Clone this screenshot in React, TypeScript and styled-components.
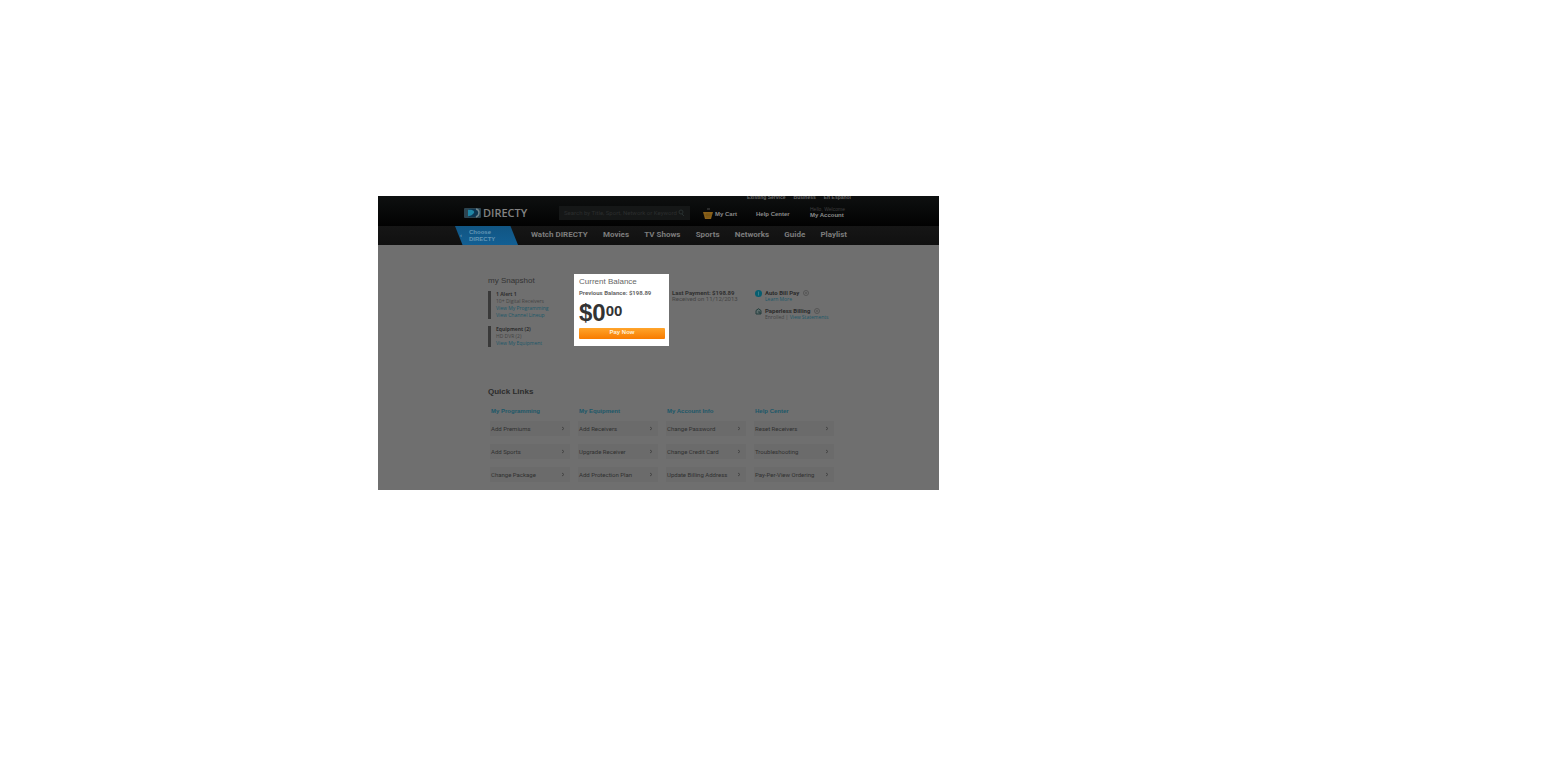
import React from "react";
import styled, { createGlobalStyle } from "styled-components";

const Global = createGlobalStyle`
  * { box-sizing: border-box; }
  body { margin: 0; background: #fff; font-family: "Liberation Sans", Arial, sans-serif; }
  a { color: inherit; text-decoration: none; }
  h1, h2, h3, p, ul { margin: 0; padding: 0; font-weight: inherit; font-size: inherit; }
  ul { list-style: none; }
  button, input { font-family: inherit; }
`;

const Page = styled.div`
  padding: 196px 24px 24px 378px;
`;
const Frame = styled.div`
  width: 100%;
  max-width: 561px;
  overflow: hidden;
  background: #6f6f6f;
  color: #2c2c2c;
`;
const Top = styled.header`
  background: linear-gradient(#0e1010, #020202);
`;
const Inner = styled.div`
  max-width: 389px;
  margin: 0 auto;
`;
const Utility = styled.nav`
  display: flex;
  justify-content: flex-end;
  align-items: flex-end;
  gap: 8px;
  height: 4px;
  padding-right: 2px;
  font-size: 5px;
  line-height: 6px;
  font-weight: 700;
  color: #686868;
`;
const Brand = styled.div`
  display: grid;
  grid-template-columns: 95px 144px 53px 54px 1fr;
  align-items: center;
  height: 26px;
  padding-bottom: 1px;
  font-size: 6px;
  font-weight: 700;
  color: #8a8a8a;
`;
const Logo = styled.a`
  display: flex;
  align-items: center;
  gap: 2px;
  font: 600 11px/12px "Open Sans", sans-serif;
  color: #828282;
`;
const Search = styled.form`
  display: flex;
  align-items: center;
  width: 131px;
  height: 14px;
  padding: 0 5px;
  background: #151717;
`;
const SearchInput = styled.input`
  flex: 1;
  min-width: 0;
  height: 10px;
  padding: 0;
  border: 0;
  background: none;
  font-family: Roboto, sans-serif;
  font-size: 6px;
  color: #303232;
  &::placeholder { color: #2c2e2e; opacity: 1; }
`;
const IconButton = styled.button`
  display: flex;
  padding: 0;
  border: 0;
  background: none;
`;
const TopLink = styled.a`
  display: flex;
  align-items: center;
  gap: 2px;
  padding-top: 2px;
  line-height: 8px;
  white-space: nowrap;
`;
const Account = styled.a`
  display: flex;
  flex-direction: column;
  font-size: 6px;
  line-height: 6px;
`;
const Greeting = styled.span`
  font-size: 5px;
  font-weight: 400;
  color: #3f3f3f;
  line-height: 5px;
`;
const NavBar = styled.nav`
  background: linear-gradient(#161616, #101010);
  height: 19px;
`;
const NavInner = styled(Inner)`
  display: flex;
  justify-content: space-between;
  padding-right: 6px;
`;
const Choose = styled.a`
  display: flex;
  align-items: center;
  gap: 7px;
  width: 63px;
  height: 19px;
  margin-left: -9px;
  padding-left: 5px;
  clip-path: polygon(0 0, 88% 0, 100% 100%, 12% 100%);
  background: linear-gradient(#115583, #125f93);
  color: #6396b5;
  font-size: 6px;
  line-height: 7px;
  font-weight: 700;
`;
const NavLinks = styled.div`
  display: flex;
  justify-content: space-between;
  width: 316px;
  font: 700 8px/18px Roboto, sans-serif;
  color: #7c7c7c;
`;
const Main = styled.main`
  padding: 29px 90px 8px 110px;
`;
const Snapshot = styled.section`
  display: grid;
  grid-template-columns: 86px 95px 86px 1fr;
  align-items: start;
  font-family: Roboto, sans-serif;
`;
const Title = styled.h2<{ $light?: boolean }>`
  font: ${(p) => (p.$light ? 400 : 700)} 8px/14px "Liberation Sans", Arial, sans-serif;
  color: ${(p) => (p.$light ? "#333" : "#2c2c2c")};
`;
const Note = styled.div`
  margin-top: 3px;
  padding-left: 5px;
  border-left: 3px solid #393939;
  font: 5px/7px "Open Sans", sans-serif;
  white-space: nowrap;
  & + & { margin-top: 7px; }
`;
const Strong = styled.p`
  font-weight: 700;
  color: #303030;
`;
const Muted = styled.p`
  color: #444;
`;
const Teal = styled.a`
  color: #1c5869;
`;
const TealLine = styled(Teal)`
  display: block;
`;
const Balance = styled.div`
  display: flex;
  flex-direction: column;
  height: 72px;
  padding: 3px 4px 7px 5px;
  background: #fff;
`;
const BalanceTitle = styled.h2`
  font-family: "Liberation Sans", Arial, sans-serif;
  font-size: 8px;
  line-height: 10px;
  color: #666;
`;
const Previous = styled.p`
  margin-top: 2px;
  font-size: 6px;
  line-height: 8px;
  font-weight: 700;
  color: #666;
  white-space: nowrap;
`;
const Amount = styled.p`
  display: flex;
  align-items: flex-start;
  margin-top: 3px;
  font: 700 24px/26px "Liberation Sans", Arial, sans-serif;
  color: #333;
`;
const Cents = styled.span`
  font-size: 15px;
  line-height: 21px;
`;
const Pay = styled.button`
  height: 11px;
  margin-top: auto;
  padding: 0 0 2px;
  border: 0;
  border-radius: 1px;
  background: linear-gradient(#ffa42b, #f87b00);
  color: #fff0d8;
  font-family: "Liberation Sans", Arial, sans-serif;
  font-size: 6px;
  line-height: 9px;
  font-weight: 700;
`;
const Info = styled.div`
  padding: 16px 0 0 3px;
  font-size: 6px;
  line-height: 6px;
  white-space: nowrap;
`;
const Services = styled.div`
  display: flex;
  flex-direction: column;
  gap: 5px;
  padding-top: 16px;
`;
const Service = styled.div`
  display: flex;
  gap: 3px;
  font-size: 6px;
  line-height: 6px;
  white-space: nowrap;
`;
const ServiceName = styled.p`
  display: flex;
  align-items: center;
  gap: 4px;
  font-weight: 700;
`;
const ServiceDetail = styled(Muted)`
  font: 5px/7px "Open Sans", sans-serif;
`;
const Quick = styled.section`
  margin-top: 38px;
`;
const QuickGrid = styled.div`
  display: grid;
  grid-template-columns: repeat(4, 80px);
  gap: 8px;
  margin-top: 7px;
  padding-left: 2px;
`;
const QuickTitle = styled.h3`
  padding-left: 1px;
  font-size: 6px;
  line-height: 10px;
  font-weight: 700;
  color: #1c5869;
`;
const LinkList = styled.ul`
  display: flex;
  flex-direction: column;
  gap: 8px;
  margin-top: 5px;
`;
const QuickLink = styled.a`
  display: flex;
  align-items: center;
  justify-content: space-between;
  height: 15px;
  padding: 0 5px 0 1px;
  background: #6b6b6b;
  font-family: Roboto, sans-serif;
  font-size: 6px;
  color: #303030;
  white-space: nowrap;
`;

const LogoMark = () => (
  <svg width="17" height="10" viewBox="0 0 17 10" aria-hidden="true">
    <rect width="17" height="10" rx="1" fill="#2c4450" />
    <path d="M5 1h7c5 1 5 7 0 8H5z" fill="#0d3652" />
    <path d="M4 2c5-1 8 2 5 4-2 2-4 2-5 2z" fill="#1f86a6" />
    <path d="M12 1c4 1 4 6 0 8" stroke="#71858b" strokeWidth="1.500" fill="none" />
  </svg>
);
const CartIcon = () => (
  <svg width="10" height="12" viewBox="0 0 10 12" aria-hidden="true">
    <path d="M4 1h3" stroke="#4a4a4a" fill="none" />
    <path d="M0 4h10L8 11H2z" fill="#8a6019" />
    <path d="M1 7h8M4 5v5M6 5v5" stroke="#6b4d12" strokeWidth=".6" />
  </svg>
);
const SearchIcon = () => (
  <svg width="8" height="8" viewBox="0 0 8 8" aria-hidden="true">
    <circle cx="4" cy="3" r="2" fill="none" stroke="#283030" />
    <path d="M5 5l2 2" stroke="#283030" />
  </svg>
);
const InfoDot = () => (
  <svg width="6" height="6" viewBox="0 0 6 6" aria-hidden="true">
    <circle cx="3" cy="3" r="2.500" fill="none" stroke="#555" />
    <path d="M3 2v2" stroke="#4c4c4c" />
  </svg>
);
const AutoPayIcon = () => (
  <svg width="7" height="7" viewBox="0 0 7 7" aria-hidden="true">
    <circle cx="3.5" cy="3.5" r="3.5" fill="#075e70" />
    <path d="M3.5 1.5v4" stroke="#397d89" />
  </svg>
);
const PaperlessIcon = () => (
  <svg width="7" height="7" viewBox="0 0 7 7" aria-hidden="true">
    <path d="M1 6V2.500L3.500.7 6 2.500V6z" fill="#5d6d6c" stroke="#263f3e" />
    <path d="M3 4h2v2" stroke="#263f3e" fill="none" />
  </svg>
);
const Chevron = () => (
  <svg width="4" height="5" viewBox="0 0 4 5" aria-hidden="true">
    <path d="M1 1l2 1.500L1 4" stroke="#454545" fill="none" />
  </svg>
);

const navItems = ["Watch DIRECTY", "Movies", "TV Shows", "Sports", "Networks", "Guide", "Playlist"];
const groups = [
  { title: "My Programming", links: ["Add Premiums", "Add Sports", "Change Package"] },
  { title: "My Equipment", links: ["Add Receivers", "Upgrade Receiver", "Add Protection Plan"] },
  { title: "My Account Info", links: ["Change Password", "Change Credit Card", "Update Billing Address"] },
  { title: "Help Center", links: ["Reset Receivers", "Troubleshooting", "Pay-Per-View Ordering"] },
];

export default function App() {
  return (
    <>
      <Global />
      <Page>
        <Frame>
          <Top>
            <Inner>
              <Utility>
                <a href="#locator">Existing Service</a>
                <a href="#business">Business</a>
                <a href="#support">En Español</a>
              </Utility>
              <Brand>
                <Logo href="#home"><LogoMark />DIRECTY</Logo>
                <Search>
                  <SearchInput aria-label="Search" placeholder="Search by Title, Sport, Network or Keyword" />
                  <IconButton type="button" aria-label="Submit search"><SearchIcon /></IconButton>
                </Search>
                <TopLink href="#cart"><CartIcon />My Cart</TopLink>
                <TopLink href="#help">Help Center</TopLink>
                <Account href="#account"><Greeting>Hello, Welcome</Greeting>My Account</Account>
              </Brand>
            </Inner>
          </Top>
          <NavBar>
            <NavInner>
              <Choose href="#choose"><span>‹</span><span>Choose<br />DIRECTY</span></Choose>
              <NavLinks>
                {navItems.map((n) => <a key={n} href="#nav">{n}</a>)}
              </NavLinks>
            </NavInner>
          </NavBar>
          <Main>
            <Snapshot>
              <div>
                <Title $light>my Snapshot</Title>
                <Note>
                  <Strong>1 Alert 1</Strong>
                  <Muted>10+ Digital Receivers</Muted>
                  <TealLine href="#programming">View My Programming</TealLine>
                  <TealLine href="#channels">View Channel Lineup</TealLine>
                </Note>
                <Note>
                  <Strong>Equipment (2)</Strong>
                  <Muted>HD DVR (2)</Muted>
                  <TealLine href="#equipment">View My Equipment</TealLine>
                </Note>
              </div>
              <Balance>
                <BalanceTitle>Current Balance</BalanceTitle>
                <Previous>Previous Balance: $198.89</Previous>
                <Amount>$0<Cents>00</Cents></Amount>
                <Pay type="button">Pay Now</Pay>
              </Balance>
              <Info>
                <Strong>Last Payment: $198.89</Strong>
                <Muted>Received on 11/12/2013</Muted>
              </Info>
              <Services>
                <Service>
                  <AutoPayIcon />
                  <div>
                    <ServiceName>Auto Bill Pay <InfoDot /></ServiceName>
                    <ServiceDetail><Teal href="#autopay">Learn More</Teal></ServiceDetail>
                  </div>
                </Service>
                <Service>
                  <PaperlessIcon />
                  <div>
                    <ServiceName>Paperless Billing <InfoDot /></ServiceName>
                    <ServiceDetail>Enrolled | <Teal href="#statements">View Statements</Teal></ServiceDetail>
                  </div>
                </Service>
              </Services>
            </Snapshot>
            <Quick>
              <Title>Quick Links</Title>
              <QuickGrid>
                {groups.map((g) => (
                  <div key={g.title}>
                    <QuickTitle>{g.title}</QuickTitle>
                    <LinkList>
                      {g.links.map((l) => (
                        <li key={l}><QuickLink href="#link">{l}<Chevron /></QuickLink></li>
                      ))}
                    </LinkList>
                  </div>
                ))}
              </QuickGrid>
            </Quick>
          </Main>
        </Frame>
      </Page>
    </>
  );
}
